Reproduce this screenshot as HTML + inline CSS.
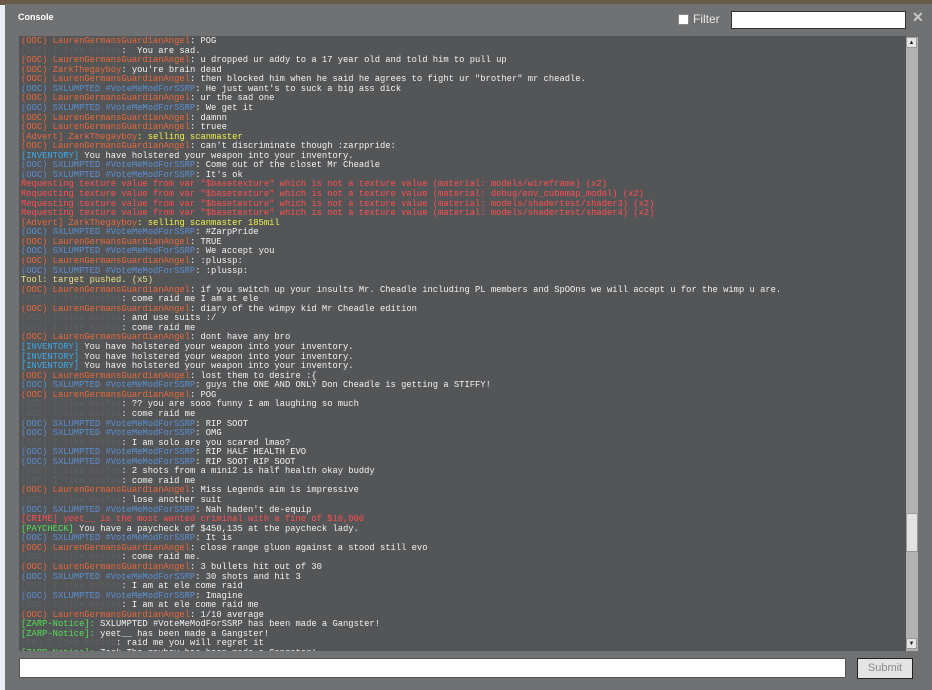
<!DOCTYPE html>
<html><head><meta charset="utf-8"><style>
html,body{margin:0;padding:0;width:932px;height:690px;overflow:hidden;background:#e8eef4}
.top{position:absolute;left:0;top:0;width:932px;height:5px;background:#6b5a45}
.win{position:absolute;left:5px;top:4px;width:927px;height:686px;background:#707173}
.title{position:absolute;left:18px;top:11px;font:bold 9px "Liberation Sans",sans-serif;color:#fff}
.cb{position:absolute;left:678px;top:14px;width:9px;height:9px;background:#fff;border:1px solid #888}
.fl{position:absolute;left:693px;top:12px;font:12px "Liberation Sans",sans-serif;color:#e8e8e8}
.fi{position:absolute;left:731px;top:11px;width:173px;height:16px;background:#fff;border:1px solid #333}
.x{position:absolute;left:912px;top:9px;font:bold 14px "Liberation Sans",sans-serif;color:#c8c8c8}
.con{position:absolute;left:19px;top:36px;width:887px;height:615px;background:#545557;overflow:hidden}
.txt{position:absolute;left:2px;top:1px;font:8.8px/9.57px "Liberation Mono",monospace;color:#f2f2f2;white-space:pre}
.sb{position:absolute;left:906px;top:37px;width:12px;height:614px;background:#b2b2b2}
.btn{position:absolute;left:0;width:11px;height:11px;background:#e4e4e4;border:1px solid #999;box-sizing:border-box;font:6px sans-serif;text-align:center;line-height:10px;color:#222}
.th{position:absolute;left:0;top:476px;width:12px;height:39px;background:#e2e2e2;border:1px solid #999;box-sizing:border-box}
.in{position:absolute;left:19px;top:658px;width:827px;height:20px;background:#fff;border:1px solid #555;box-sizing:border-box}
.sub{position:absolute;left:857px;top:658px;width:56px;height:21px;background:#e4e4e4;border:1px solid #222;box-sizing:border-box;font:11px "Liberation Sans",sans-serif;color:#888;text-align:center;line-height:19px}
.o{color:#e8683a}.b{color:#5a8fd2}.f{color:#5f6063}.y{color:#f2f24a}.r{color:#ff4f4f}.c{color:#3ba9ea}.g{color:#55e055}.t{color:#e8e080}
</style></head><body>
<div class="top"></div>
<div class="win">
<div class="title" style="left:13px;top:8px">Console</div>
</div>
<div class="cb"></div><div class="fl">Filter</div><div class="fi"></div><div class="x">✕</div>
<div class="con"><div class="txt"><span class="o">(OOC) LaurenGermansGuardianAngel</span>: POG
<span class="f">(OOC) I like Knifes</span>:  You are sad.
<span class="o">(OOC) LaurenGermansGuardianAngel</span>: u dropped ur addy to a 17 year old and told him to pull up
<span class="o">(OOC) ZarkThegayboy</span>: you're brain dead
<span class="o">(OOC) LaurenGermansGuardianAngel</span>: then blocked him when he said he agrees to fight ur "brother" mr cheadle.
<span class="b">(OOC) SXLUMPTED #VoteMeModForSSRP</span>: He just want's to suck a big ass dick
<span class="o">(OOC) LaurenGermansGuardianAngel</span>: ur the sad one
<span class="b">(OOC) SXLUMPTED #VoteMeModForSSRP</span>: We get it
<span class="o">(OOC) LaurenGermansGuardianAngel</span>: damnn
<span class="o">(OOC) LaurenGermansGuardianAngel</span>: truee
<span class="o">[Advert] ZarkThegayboy</span><span class="y">: selling scanmaster</span>
<span class="o">(OOC) LaurenGermansGuardianAngel</span>: can't discriminate though :zarppride:
<span class="c">[INVENTORY]</span> You have holstered your weapon into your inventory.
<span class="b">(OOC) SXLUMPTED #VoteMeModForSSRP</span>: Come out of the closet Mr Cheadle
<span class="b">(OOC) SXLUMPTED #VoteMeModForSSRP</span>: It's ok
<span class="r">Requesting texture value from var "$basetexture" which is not a texture value (material: models/wireframe) (x2)
Requesting texture value from var "$basetexture" which is not a texture value (material: debug/env_cubemap_model) (x2)
Requesting texture value from var "$basetexture" which is not a texture value (material: models/shadertest/shader3) (x2)
Requesting texture value from var "$basetexture" which is not a texture value (material: models/shadertest/shader4) (x2)</span>
<span class="o">[Advert] ZarkThegayboy</span><span class="y">: selling scanmaster 185mil</span>
<span class="b">(OOC) SXLUMPTED #VoteMeModForSSRP</span>: #ZarpPride
<span class="o">(OOC) LaurenGermansGuardianAngel</span>: TRUE
<span class="b">(OOC) SXLUMPTED #VoteMeModForSSRP</span>: We accept you
<span class="o">(OOC) LaurenGermansGuardianAngel</span>: :plussp:
<span class="b">(OOC) SXLUMPTED #VoteMeModForSSRP</span>: :plussp:
<span class="t">Tool: target pushed. (x5)</span>
<span class="o">(OOC) LaurenGermansGuardianAngel</span>: if you switch up your insults Mr. Cheadle including PL members and SpOOns we will accept u for the wimp u are.
<span class="f">(OOC) I like Knifes</span>: come raid me I am at ele
<span class="o">(OOC) LaurenGermansGuardianAngel</span>: diary of the wimpy kid Mr Cheadle edition
<span class="f">(OOC) I like Knifes</span>: and use suits :/
<span class="f">(OOC) I like Knifes</span>: come raid me
<span class="o">(OOC) LaurenGermansGuardianAngel</span>: dont have any bro
<span class="c">[INVENTORY]</span> You have holstered your weapon into your inventory.
<span class="c">[INVENTORY]</span> You have holstered your weapon into your inventory.
<span class="c">[INVENTORY]</span> You have holstered your weapon into your inventory.
<span class="o">(OOC) LaurenGermansGuardianAngel</span>: lost them to desire :{
<span class="b">(OOC) SXLUMPTED #VoteMeModForSSRP</span>: guys the ONE AND ONLY Don Cheadle is getting a STIFFY!
<span class="o">(OOC) LaurenGermansGuardianAngel</span>: POG
<span class="f">(OOC) I like Knifes</span>: ?? you are sooo funny I am laughing so much
<span class="f">(OOC) I like Knifes</span>: come raid me
<span class="b">(OOC) SXLUMPTED #VoteMeModForSSRP</span>: RIP SOOT
<span class="b">(OOC) SXLUMPTED #VoteMeModForSSRP</span>: OMG
<span class="f">(OOC) I like Knifes</span>: I am solo are you scared lmao?
<span class="b">(OOC) SXLUMPTED #VoteMeModForSSRP</span>: RIP HALF HEALTH EVO
<span class="b">(OOC) SXLUMPTED #VoteMeModForSSRP</span>: RIP SOOT RIP SOOT
<span class="f">(OOC) I like Knifes</span>: 2 shots from a mini2 is half health okay buddy
<span class="f">(OOC) I like Knifes</span>: come raid me
<span class="o">(OOC) LaurenGermansGuardianAngel</span>: Miss Legends aim is impressive
<span class="f">(OOC) I like Knifes</span>: lose another suit
<span class="b">(OOC) SXLUMPTED #VoteMeModForSSRP</span>: Nah haden't de-equip
<span class="r">[CRIME] yeet__ is the most wanted criminal with a fine of $16,000</span>
<span class="g">[PAYCHECK]</span> You have a paycheck of $450,135 at the paycheck lady.
<span class="b">(OOC) SXLUMPTED #VoteMeModForSSRP</span>: It is
<span class="o">(OOC) LaurenGermansGuardianAngel</span>: close range gluon against a stood still evo
<span class="f">(OOC) I like Knifes</span>: come raid me.
<span class="o">(OOC) LaurenGermansGuardianAngel</span>: 3 bullets hit out of 30
<span class="b">(OOC) SXLUMPTED #VoteMeModForSSRP</span>: 30 shots and hit 3
<span class="f">(OOC) I like Knifes</span>: I am at ele come raid
<span class="b">(OOC) SXLUMPTED #VoteMeModForSSRP</span>: Imagine
<span class="f">(OOC) I like Knifes</span>: I am at ele come raid me
<span class="o">(OOC) LaurenGermansGuardianAngel</span>: 1/10 average
<span class="g">[ZARP-Notice]:</span> SXLUMPTED #VoteMeModForSSRP has been made a Gangster!
<span class="g">[ZARP-Notice]:</span> yeet__ has been made a Gangster!
<span class="f">(PM) I like Knifes</span>: raid me you will regret it
<span class="g">[ZARP-Notice]:</span> Zark The gayboy has been made a Gangster!</div></div>
<div class="sb"><div class="btn" style="top:0">▲</div><div class="th"></div><div class="btn" style="top:601px">▼</div></div>
<div class="in"></div>
<div class="sub">Submit</div>
</body></html>
